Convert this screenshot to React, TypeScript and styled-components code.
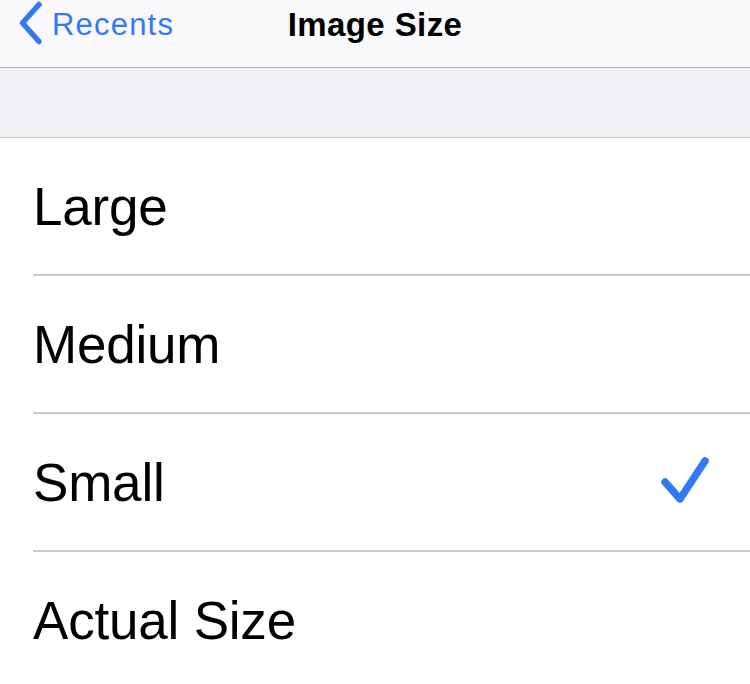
import React from "react";
import styled, { createGlobalStyle } from "styled-components";

const Global = createGlobalStyle`
  html, body { margin: 0; padding: 0; background: #ffffff; }
  body { font-family: "Liberation Sans", Arial, sans-serif; overflow: hidden; }
`;

const Page = styled.div`
  width: 750px;
  height: 684px;
  display: flex;
  flex-direction: column;
  background: #ffffff;
  overflow: hidden;
`;

const NavBar = styled.header`
  height: 67px;
  flex: none;
  background: #f9f9fb;
  border-bottom: 1px solid #b2b2b6;
  display: grid;
  grid-template-columns: 1fr auto 1fr;
  align-items: start;
`;

const BackButton = styled.div`
  display: flex;
  align-items: center;
  gap: 9px;
  padding-left: 17px;
  height: 46px;
  color: #3478f6;
  font-size: 31px;
  letter-spacing: 1.2px;
  line-height: 1;
`;

const BackLabel = styled.span`
  padding-top: 2px;
`;

const Title = styled.div`
  height: 46px;
  padding-top: 2px;
  box-sizing: border-box;
  display: flex;
  align-items: center;
  font-size: 33px;
  font-weight: 700;
  color: #000;
  letter-spacing: 0.4px;
  line-height: 1;
`;

const GroupGap = styled.div`
  height: 69px;
  flex: none;
  background: #f0f0f5;
  border-bottom: 1px solid #c8c7cc;
`;

const List = styled.div`
  display: flex;
  flex-direction: column;
`;

const Row = styled.div<{ $last?: boolean }>`
  height: 138px;
  flex: none;
  display: flex;
  align-items: center;
  padding-left: 33px;
  position: relative;
  &::after {
    content: "";
    display: ${(p) => (p.$last ? "none" : "block")};
    position: absolute;
    left: 33px;
    right: 0;
    bottom: 0;
    height: 2px;
    background: #c8c7cc;
  }
`;

const Label = styled.span`
  flex: 1;
  font-size: 53px;
  color: #000;
  letter-spacing: -0.2px;
  padding-bottom: 2px;
`;

const Check = styled.svg`
  width: 56px;
  height: 56px;
  margin-right: 36px;
`;

const items = ["Large", "Medium", "Small", "Actual Size"];

export default function App() {
  return (
    <Page>
      <Global />
      <NavBar>
        <BackButton>
          <svg width="26" height="44" viewBox="0 0 26 44">
            <path d="M22 3.5 L5.5 22 L22 40.5" fill="none" stroke="#3478f6" strokeWidth="5.5" strokeLinecap="round" strokeLinejoin="round" />
          </svg>
          <BackLabel>Recents</BackLabel>
        </BackButton>
        <Title>Image Size</Title>
        <div />
      </NavBar>
      <GroupGap />
      <List>
        {items.map((it, i) => (
          <Row key={it} $last={i === items.length - 1}>
            <Label>{it}</Label>
            {it === "Small" && (
              <Check viewBox="0 0 56 56">
                <path d="M7 27 L22 44 L47 6" fill="none" stroke="#3478f6" strokeWidth="7.5" strokeLinecap="round" strokeLinejoin="round" />
              </Check>
            )}
          </Row>
        ))}
      </List>
    </Page>
  );
}
